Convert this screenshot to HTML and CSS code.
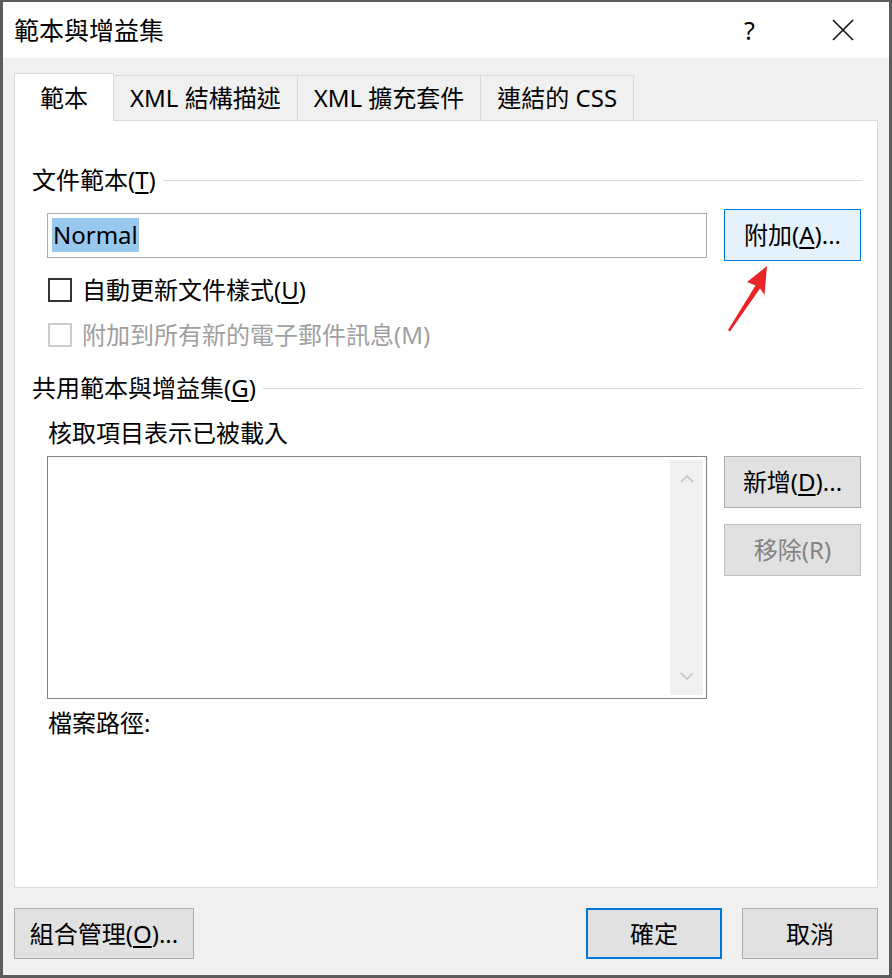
FILE: index.html
```html
<!DOCTYPE html>
<html lang="zh-Hant">
<head>
<meta charset="utf-8">
<title>範本與增益集</title>
<link rel="stylesheet" href="styles.css">
</head>
<body>
<div class="window">
  <header class="titlebar">
    <span class="title">範本與增益集</span>
    <div class="caption-btns">
      <span class="cap-btn help">?</span>
      <span class="cap-btn close">
        <svg width="22" height="22" viewBox="0 0 22 22"><path d="M1 1 L21 21 M21 1 L1 21" stroke="#111" stroke-width="1.6" fill="none"/></svg>
      </span>
    </div>
  </header>

  <main class="body">
    <nav class="tabs">
      <div class="tab active">範本</div>
      <div class="tab">XML 結構描述</div>
      <div class="tab">XML 擴充套件</div>
      <div class="tab">連結的 CSS</div>
    </nav>

    <section class="panel">
      <div class="group-head head-doc"><span>文件範本(<u>T</u>)</span><i class="rule"></i></div>

      <div class="indent template-row">
        <div class="textbox"><span class="sel">Normal</span></div>
        <div class="btn btn-side btn-hot">附加(<u>A</u>)...</div>
        <svg class="arrow" width="56" height="76" viewBox="0 0 56 76">
          <polygon points="47,6 27,22 35.5,25.5 8,70 10,71.5 40,28.5 44.5,35" fill="#e8262a"/>
        </svg>
      </div>

      <label class="indent check cb-first"><span class="box"></span><span>自動更新文件樣式(<u>U</u>)</span></label>
      <label class="indent check cb-second disabled"><span class="box"></span><span>附加到所有新的電子郵件訊息(M)</span></label>

      <div class="group-head head-global"><span>共用範本與增益集(<u>G</u>)</span><i class="rule"></i></div>

      <div class="indent hint">核取項目表示已被載入</div>

      <div class="indent list-row">
        <div class="listbox">
          <div class="scrollbar">
            <svg width="14" height="8" viewBox="0 0 14 8"><polyline points="1,7 7,1 13,7" fill="none" stroke="#c2c2c2" stroke-width="1.5"/></svg>
            <svg width="14" height="8" viewBox="0 0 14 8"><polyline points="1,1 7,7 13,1" fill="none" stroke="#c2c2c2" stroke-width="1.5"/></svg>
          </div>
        </div>
        <div class="side-btns">
          <div class="btn btn-side">新增(<u>D</u>)...</div>
          <div class="btn btn-side btn-disabled">移除(R)</div>
        </div>
      </div>

      <div class="indent path">檔案路徑:</div>
    </section>

    <footer class="footer">
      <div class="btn btn-organize">組合管理(<u>O</u>)...</div>
      <div class="footer-right">
        <div class="btn btn-foot btn-default">確定</div>
        <div class="btn btn-foot">取消</div>
      </div>
    </footer>
  </main>
</div>
</body>
</html>
```

FILE: styles.css
```css
* { box-sizing: border-box; }

html, body {
  margin: 0;
  padding: 0;
  background: #ffffff;
}

body {
  font-family: "Noto Sans", "Noto Sans CJK TC", sans-serif;
  font-size: 24px;
  color: #000;
}

u { text-decoration: underline; text-underline-offset: 3px; text-decoration-thickness: 2px; }

.window {
  width: 892px;
  height: 978px;
  border: 3px solid #5c5c5c;
  border-top-width: 2px;
  display: flex;
  flex-direction: column;
  background: #f0f0f0;
}

/* ---------- title bar ---------- */
.titlebar {
  height: 56px;
  flex: 0 0 56px;
  background: #fff;
  display: flex;
  align-items: center;
  padding-left: 11px;
}

.title {
  font-size: 25px;
  line-height: 30px;
  margin-top: 0;
}

.caption-btns {
  margin-left: auto;
  display: flex;
  height: 100%;
}

.cap-btn {
  width: 93px;
  display: flex;
  align-items: center;
  justify-content: center;
}

.help {
  font-size: 25px;
  line-height: 30px;
}

/* ---------- body ---------- */
.body {
  flex: 1;
  display: flex;
  flex-direction: column;
  padding: 15px 11px 16px 11px;
}

.tabs {
  display: flex;
  align-items: flex-end;
  margin-bottom: -1px;
  position: relative;
  z-index: 1;
}

.tab {
  height: 46px;
  padding: 0 16px;
  display: flex;
  align-items: center;
  justify-content: center;
  line-height: 30px;
  background: #f0f0f0;
  border: 1px solid #d9d9d9;
  border-left: 0;
  white-space: nowrap;
}

.tab.active {
  height: 48px;
  padding: 0 25px;
  background: #fff;
  border-left: 1px solid #d9d9d9;
  border-bottom: 0;
}

.panel {
  flex: 1;
  background: #fff;
  border: 1px solid #d9d9d9;
  padding: 0 16px;
  display: flex;
  flex-direction: column;
}

.group-head {
  display: flex;
  align-items: center;
  line-height: 30px;
  padding-left: 1px;
}

.group-head .rule {
  flex: 1;
  height: 1px;
  background: #dcdcdc;
  margin-left: 7px;
  margin-right: -1px;
}

.head-doc { margin-top: 44px; }
.head-global { margin-top: 23px; }

.indent { margin-left: 16px; }

.template-row {
  position: relative;
  display: flex;
  align-items: center;
  gap: 17px;
  margin-top: 14px;
  height: 52px;
}

.textbox {
  flex: 1;
  height: 45px;
  border: 1px solid #adadad;
  display: flex;
  align-items: center;
  padding-left: 4px;
}

.sel {
  background: #99c8ef;
  line-height: 34px;
  padding: 0 1px;
}

.arrow {
  position: absolute;
  left: 673px;
  top: 51px;
}

.btn {
  display: flex;
  align-items: center;
  justify-content: center;
  background: #e1e1e1;
  border: 1px solid #adadad;
  line-height: 30px;
  white-space: nowrap;
}

.btn-side {
  width: 137px;
  height: 52px;
}

.btn-hot {
  background: #e5f1fb;
  border-color: #0078d7;
}

.btn-disabled {
  color: #838383;
  border-color: #bfbfbf;
}

.check {
  display: flex;
  align-items: center;
  gap: 10px;
  line-height: 30px;
  height: 30px;
  padding-left: 1px;
}

.check .box {
  width: 24px;
  height: 24px;
  border: 2px solid #333;
  background: #fff;
}

.check.disabled { color: #a0a0a0; }
.check.disabled .box { border-color: #cccccc; }

.cb-first { margin-top: 14px; }
.cb-second { margin-top: 15px; }

.hint {
  margin-top: 15px;
  line-height: 30px;
  padding-left: 1px;
}

.list-row {
  margin-top: 8px;
  display: flex;
  gap: 17px;
  align-items: flex-start;
}

.listbox {
  flex: 1;
  height: 243px;
  border: 1px solid #828282;
  background: #fff;
  display: flex;
  justify-content: flex-end;
  padding: 3px;
}

.scrollbar {
  width: 33px;
  background: #f0f0f0;
  display: flex;
  flex-direction: column;
  justify-content: space-between;
  align-items: center;
  padding: 15px 0 15px;
}

.side-btns {
  display: flex;
  flex-direction: column;
  gap: 16px;
}

.path {
  margin-top: 9px;
  line-height: 30px;
  padding-left: 1px;
}

/* ---------- footer ---------- */
.footer {
  margin-top: 20px;
  display: flex;
  justify-content: space-between;
  height: 51px;
}

.btn-organize {
  width: 180px;
  height: 51px;
}

.footer-right {
  display: flex;
  gap: 20px;
}

.btn-foot {
  width: 136px;
  height: 51px;
}

.btn-default {
  border: 2px solid #0078d7;
}
```
